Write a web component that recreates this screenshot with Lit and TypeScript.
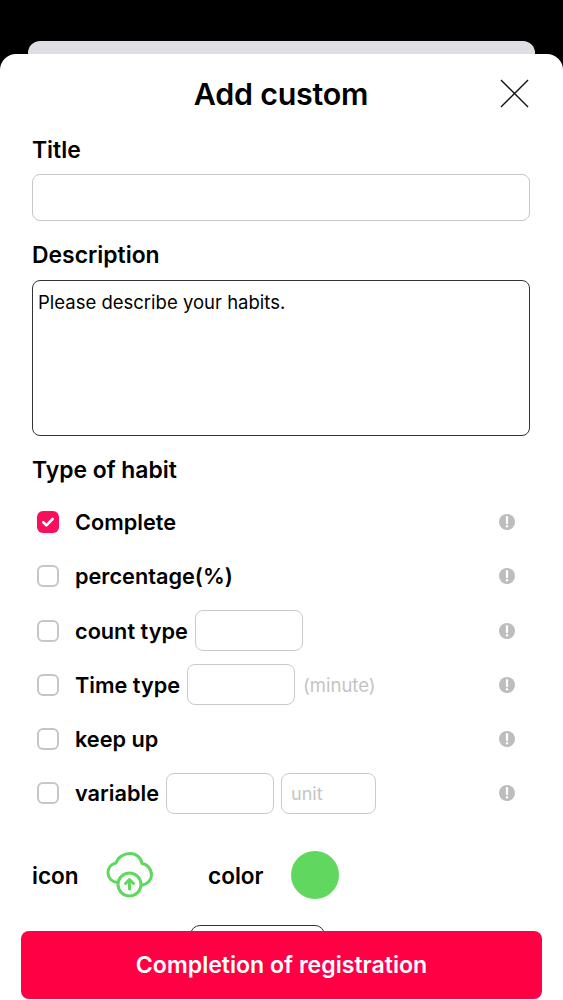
import {html, css, LitElement, svg} from 'lit';
import {customElement} from 'lit/decorators.js';

const infoIcon = svg`<circle cx="8" cy="8" r="8" fill="#bdbdbd"/><path d="M8 3.2v6" stroke="#fff" stroke-width="2.2" stroke-linecap="round"/><circle cx="8" cy="12.2" r="1.2" fill="#fff"/>`;

@customElement('app-root')
export class AppRoot extends LitElement {
    private info() {
        return html`<svg class="info" viewBox="0 0 16 16">${infoIcon}</svg>`;
    }

    private check(on = false) {
        if (on) {
            return html`<span class="check on">
                <svg viewBox="0 0 22 22"><path d="M6.2 11.2l3.2 3.2 6.2-6.4" fill="none" stroke="#fff" stroke-width="2.6" stroke-linecap="round" stroke-linejoin="round"/></svg>
            </span>`;
        }
        return html`<span class="check"></span>`;
    }

    render() {
        return html`
            <div class="back-card"></div>
            <div class="sheet">
                <div class="header">
                    <h1>Add custom</h1>
                    <svg class="close" viewBox="0 0 30 30"><path d="M1 1l28 28M29 1L1 29" stroke="#111" stroke-width="1.4" fill="none"/></svg>
                </div>
                <div class="label">Title</div>
                <div class="field"></div>
                <div class="label desc-label">Description</div>
                <div class="area">Please describe your habits.</div>
                <div class="label type-label">Type of habit</div>
                <div class="rows">
                    <div class="row">${this.check(true)}<span class="name">Complete</span>${this.info()}</div>
                    <div class="row">${this.check()}<span class="name">percentage(%)</span>${this.info()}</div>
                    <div class="row">${this.check()}<span class="name">count type</span><span class="box"></span>${this.info()}</div>
                    <div class="row">${this.check()}<span class="name">Time type</span><span class="box"></span><span class="hint">(minute)</span>${this.info()}</div>
                    <div class="row">${this.check()}<span class="name">keep up</span>${this.info()}</div>
                    <div class="row">${this.check()}<span class="name">variable</span><span class="box"></span><span class="box unit">unit</span>${this.info()}</div>
                </div>
                <div class="picker">
                    <span class="pick-name icon-label">icon</span>
                    <svg class="cloud" viewBox="0 0 48 48" fill="none" stroke="#5fd85f" stroke-width="3" stroke-linecap="round" stroke-linejoin="round">
                        <path d="M12.500 31.500C7 31 3 27 3 22c0-5 3-9 8-10C13 6 19 2.500 25 2.500c6 0 11 4 12 10C42 13 46.500 18 46.500 24c0 5-4 9-9 10"/>
                        <circle cx="24.500" cy="33.500" r="11.500" fill="#fff"/>
                        <path d="M24.500 38v-9M20.500 32.500l4-4 4 4"/>
                    </svg>
                    <span class="pick-name color-label">color</span>
                    <span class="swatch"></span>
                </div>
                <div class="hidden-btn"></div>
            </div>
            <div class="submit">Completion of registration</div>
        `;
    }

    static styles = [
        css`
            :host {
                display: block;
                position: relative;
                width: 563px;
                height: 1000px;
                overflow: hidden;
                background: #000;
                font-family: Inter, "Liberation Sans", sans-serif;
                color: #000;
            }

            .back-card {
                position: absolute;
                left: 28px;
                right: 28px;
                top: 41px;
                height: 40px;
                background: #dfdee2;
                border-radius: 12px 12px 0 0;
            }

            .sheet {
                position: absolute;
                left: 0;
                right: 0;
                top: 54px;
                bottom: 0;
                background: #fff;
                border-radius: 16px 16px 0 0;
                padding: 0 33px 0 32px;
            }

            .header {
                position: relative;
                height: 80px;
                display: flex;
                align-items: center;
                justify-content: center;
            }

            h1 {
                margin: 0;
                font-size: 30.400px;
                font-weight: 600;
                letter-spacing: -0.2px;
            }

            .close {
                position: absolute;
                right: 1px;
                top: 25px;
                width: 29px;
                height: 29px;
            }

            .label {
                font-size: 22.900px;
                font-weight: 600;
                line-height: 32px;
            }

            .field {
                box-sizing: border-box;
                height: 47px;
                margin-top: 8px;
                border: 1px solid #c6c6c6;
                border-radius: 8px;
            }

            .desc-label {
                margin-top: 18px;
            }

            .area {
                box-sizing: border-box;
                height: 156px;
                margin-top: 9px;
                padding: 9px 5px;
                border: 1px solid #333;
                border-radius: 8px;
                font-size: 18.500px;
                line-height: 24px;
            }

            .type-label {
                margin-top: 18px;
            }

            .rows {
                display: flex;
                flex-direction: column;
                gap: 14.300px;
                margin-top: 16px;
            }

            .row {
                display: flex;
                align-items: center;
                height: 40px;
                padding-left: 5px;
            }

            .check {
                box-sizing: border-box;
                flex: none;
                width: 22px;
                height: 22px;
                margin-right: 16px;
                border: 2px solid #c6c6c6;
                border-radius: 6px;
            }

            .check.on {
                background: #fa0f5c;
                border: none;
            }

            .check svg {
                display: block;
                width: 22px;
                height: 22px;
            }

            .name {
                font-size: 21.700px;
                font-weight: 600;
            }

            .pick-name {
                font-size: 22.600px;
                font-weight: 600;
            }

            .box {
                box-sizing: border-box;
                flex: none;
                width: 108px;
                height: 41px;
                margin-left: 7px;
                border: 1px solid #cbc9ce;
                border-radius: 8px;
            }

            .box.unit {
                width: 95px;
                padding-left: 9px;
                font-size: 18px;
                line-height: 39px;
                color: #c4c4c4;
            }

            .hint {
                margin-left: 8px;
                font-size: 18.500px;
                color: #c4c4c4;
            }

            .info {
                flex: none;
                width: 16px;
                height: 16px;
                margin-left: auto;
                margin-right: 15px;
            }

            .picker {
                display: flex;
                align-items: center;
                margin-top: 37px;
                height: 50px;
            }

            .icon-label {
                width: 73px;
            }

            .cloud {
                flex: none;
                width: 48px;
                height: 48px;
            }

            .color-label {
                margin-left: 55px;
                width: 83px;
            }

            .swatch {
                flex: none;
                width: 48px;
                height: 48px;
                border-radius: 50%;
                background: #60d860;
            }

            .hidden-btn {
                box-sizing: border-box;
                width: 135px;
                height: 50px;
                margin: 25px 0 0 158px;
                border: 1px solid #333;
                border-radius: 10px;
            }

            .submit {
                position: absolute;
                left: 21px;
                top: 931px;
                width: 521px;
                height: 68px;
                display: flex;
                align-items: center;
                justify-content: center;
                background: #ff0045;
                border-radius: 8px;
                color: #fff;
                font-size: 23.100px;
                font-weight: 600;
            }
        `
    ];
}
